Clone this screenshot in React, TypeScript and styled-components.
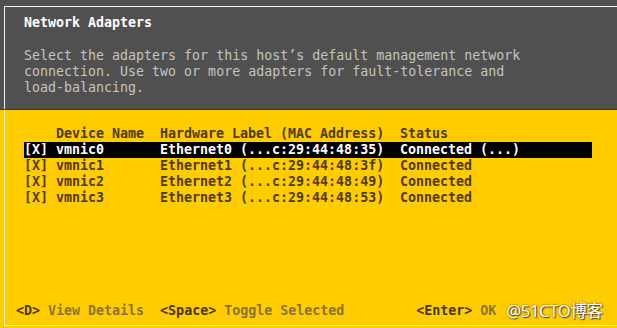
import React from "react";
import styled, { createGlobalStyle } from "styled-components";

const GlobalStyle = createGlobalStyle`
  html, body { margin: 0; padding: 0; background: #ffcc00; }
  body { font-family: "DejaVu Sans Mono", "Liberation Mono", monospace; }
`;

const Screen = styled.div`
  width: 617px;
  height: 328px;
  display: flex;
  flex-direction: column;
  overflow: hidden;
  font-size: 13.3px;
  line-height: 16px;
`;

const TopBand = styled.div`
  height: 110px;
  box-sizing: border-box;
  background: #505050;
  padding: 6px 0 0 4px;
  border-bottom: 1px solid #3c3838;
  display: flex;
`;

const TopFrame = styled.div`
  flex: 1;
  border-top: 1px solid #f4f4f4;
  border-left: 1px solid #f4f4f4;
  padding: 8px 0 0 19px;
  display: flex;
  flex-direction: column;
  gap: 17px;
`;

const Title = styled.div`
  color: #ffffff;
  font-weight: bold;
  white-space: pre;
`;

const Description = styled.div`
  color: #c4c4c4;
  white-space: pre;
`;

const BottomBand = styled.div`
  flex: 1;
  display: flex;
  padding: 0 0 2px 4px;
`;

const BottomFrame = styled.div`
  flex: 1;
  border-left: 1px solid #fff2b8;
  border-bottom: 1px solid #fff2b8;
  padding: 16px 0 6px 0;
  display: flex;
  flex-direction: column;
`;

const Table = styled.div`
  display: flex;
  flex-direction: column;
  margin-left: 19px;
  width: 568px;
`;

const Row = styled.div<{ $selected?: boolean }>`
  display: grid;
  grid-template-columns: 32px 104px 240px 192px;
  height: 16px;
  white-space: pre;
  font-weight: bold;
  background: ${(p) => (p.$selected ? "#000000" : "transparent")};
  color: ${(p) => (p.$selected ? "#ffffff" : "#4e3b00")};
`;

const Cell = styled.span`
  overflow: hidden;
`;

const Footer = styled.div`
  margin-top: auto;
  margin-left: 11px;
  display: flex;
  align-items: center;
  gap: 16px;
  white-space: pre;
  height: 16px;
`;

const Hint = styled.span<{ $push?: number }>`
  margin-left: ${(p) => p.$push ?? 0}px;
  display: flex;
  gap: 8px;
`;

const Key = styled.span`
  color: #46360a;
  font-weight: bold;
`;

const Action = styled.span`
  color: #8a7330;
  font-weight: bold;
`;

const Watermark = styled.span`
  margin-left: -6px;
  font-family: "Noto Sans", "Noto Sans CJK SC", sans-serif;
  font-size: 16.5px;
  color: #ffffff;
  text-shadow: 0 0 2px #5a4a20, 1px 1px 1px #5a4a20;
  letter-spacing: -0.3px;
`;

const adapters = [
  { name: "vmnic0", label: "Ethernet0 (...c:29:44:48:35)", status: "Connected (...)" },
  { name: "vmnic1", label: "Ethernet1 (...c:29:44:48:3f)", status: "Connected" },
  { name: "vmnic2", label: "Ethernet2 (...c:29:44:48:49)", status: "Connected" },
  { name: "vmnic3", label: "Ethernet3 (...c:29:44:48:53)", status: "Connected" },
];

export default function App() {
  return (
    <>
      <GlobalStyle />
      <Screen>
        <TopBand>
          <TopFrame>
            <Title>Network Adapters</Title>
            <Description>
              {"Select the adapters for this host\u2019s default management network\nconnection. Use two or more adapters for fault-tolerance and\nload-balancing."}
            </Description>
          </TopFrame>
        </TopBand>
        <BottomBand>
          <BottomFrame>
            <Table>
              <Row>
                <Cell />
                <Cell>Device Name</Cell>
                <Cell>Hardware Label (MAC Address)</Cell>
                <Cell>Status</Cell>
              </Row>
              {adapters.map((a, i) => (
                <Row key={a.name} $selected={i === 0}>
                  <Cell>[X]</Cell>
                  <Cell>{a.name}</Cell>
                  <Cell>{a.label}</Cell>
                  <Cell>{a.status}</Cell>
                </Row>
              ))}
            </Table>
            <Footer>
              <Hint>
                <Key>&lt;D&gt;</Key>
                <Action>View Details</Action>
              </Hint>
              <Hint>
                <Key>&lt;Space&gt;</Key>
                <Action>Toggle Selected</Action>
              </Hint>
              <Hint $push={56}>
                <Key>&lt;Enter&gt;</Key>
                <Action>OK</Action>
              </Hint>
              <Watermark>@51CTO博客</Watermark>
            </Footer>
          </BottomFrame>
        </BottomBand>
      </Screen>
    </>
  );
}
